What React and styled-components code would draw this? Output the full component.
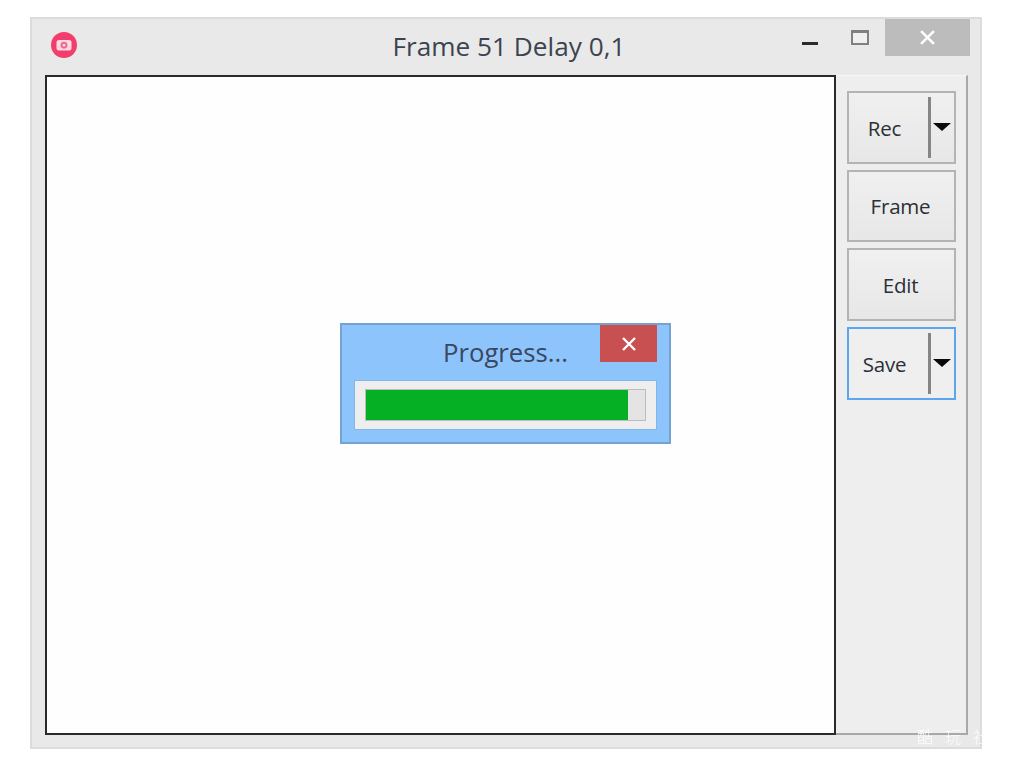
import React from "react";
import styled, { createGlobalStyle } from "styled-components";

const Global = createGlobalStyle`
  html, body { margin: 0; padding: 0; background: #fff; }
  body { font-family: "Open Sans", "Noto Sans", sans-serif; }
`;

const Page = styled.div`
  width: 1020px;
  height: 776px;
  box-sizing: border-box;
  padding: 17px 0 0 30px;
  overflow: hidden;
  filter: blur(0.45px);
`;

const Window = styled.div`
  position: relative;
  width: 952px;
  height: 732px;
  box-sizing: border-box;
  border: 2px solid #dcdcdc;
  background: #e9e9e9;
`;

const TitleBar = styled.header`
  display: grid;
  grid-template-columns: 1fr auto 1fr;
  height: 56px;
`;

const AppIcon = styled.svg`
  width: 28px;
  height: 28px;
  margin: 12px 0 0 18px;
  display: block;
`;

const Title = styled.h1`
  margin: 0;
  padding: 9px 0 0 6px;
  font-size: 26.2px;
  font-weight: 400;
  line-height: 36px;
  color: #3c4350;
  white-space: nowrap;
`;

const Controls = styled.div`
  display: flex;
  justify-content: flex-end;
  align-items: flex-start;
  padding-right: 10px;
`;

const Minimize = styled.span`
  width: 16px;
  height: 3px;
  margin: 23px 33px 0 0;
  background: #2c2c2c;
`;

const Maximize = styled.span`
  width: 18px;
  height: 15px;
  box-sizing: border-box;
  margin: 11px 16px 0 0;
  border: 2px solid #808080;
  border-top-width: 3px;
  background: #efefef;
`;

const CloseButton = styled.button`
  display: flex;
  align-items: center;
  justify-content: center;
  padding: 0;
  border: 0;
  width: ${(p) => p.$w}px;
  height: 37px;
  background: ${(p) => p.$bg};
`;

const Body = styled.div`
  display: flex;
  padding-left: 13px;
`;

const Canvas = styled.main`
  position: relative;
  width: 791px;
  height: 660px;
  box-sizing: border-box;
  border: 2px solid #2a2a2a;
  background: #fefefe;
`;

const Side = styled.aside`
  width: 132px;
  height: 660px;
  box-sizing: border-box;
  display: flex;
  flex-direction: column;
  gap: 6px;
  padding: 15px 0 0 11px;
  background: #eeeeee;
  border-top: 1px solid #f6f6f6;
  border-right: 2px solid #a8a8a8;
  border-bottom: 2px solid #a8a8a8;
`;

const ToolButton = styled.button`
  display: flex;
  align-items: center;
  width: 109px;
  height: 72.67px;
  flex: none;
  box-sizing: border-box;
  padding: 0;
  border: 2px solid ${(p) => (p.$focused ? "#5ba6ee" : "#b4b4b4")};
  background: ${(p) => (p.$focused ? "#efefef" : "linear-gradient(#f0f0f0, #e7e7e7)")};
  font-family: "Open Sans", "Noto Sans", sans-serif;
  font-size: 20.5px;
  letter-spacing: -0.2px;
  color: #2b2f36;
`;

const Label = styled.span`
  display: block;
  box-sizing: border-box;
  width: ${(p) => (p.$split ? "71px" : "100%")};
  padding-right: ${(p) => (p.$split ? "0" : "2px")};
  padding-top: ${(p) => (p.$split ? "1px" : "0")};
  text-align: center;
`;

const Separator = styled.span`
  width: 3px;
  height: 61px;
  margin-left: 8px;
  background: #858585;
`;

const Arrow = styled.span`
  width: 0;
  height: 0;
  margin-left: 2px;
  border-left: 9px solid transparent;
  border-right: 9px solid transparent;
  border-top: 8px solid #0a0a0a;
`;

const Dialog = styled.section`
  position: absolute;
  left: 293px;
  top: 246px;
  width: 331px;
  height: 121px;
  box-sizing: border-box;
  border: 2px solid #74a3d2;
  background: #8cc4fb;
  padding: 0 12px;
`;

const DialogHeader = styled.div`
  position: relative;
  height: 55px;
  text-align: center;
`;

const DialogTitle = styled.h2`
  margin: 0;
  padding-top: 8px;
  font-size: 25.7px;
  font-weight: 400;
  line-height: 40px;
  color: #3b4660;
`;

const DialogClose = styled(CloseButton)`
  position: absolute;
  top: 0;
  right: 0;
`;

const ProgressPanel = styled.div`
  height: 50px;
  box-sizing: border-box;
  padding: 8px 10px;
  background: #eeeeee;
  border: 1px solid #82b6e6;
`;

const Track = styled.div`
  height: 32px;
  box-sizing: border-box;
  border: 1px solid #bcbcbc;
  background: #e4e4e4;
`;

const Fill = styled.div`
  height: 100%;
  background: #06b025;
`;

const Watermark = styled.div`
  position: absolute;
  left: 885px;
  top: 707px;
  font-family: "Noto Sans CJK SC", sans-serif;
  font-size: 16px;
  font-weight: 300;
  letter-spacing: 12px;
  line-height: 20px;
  white-space: nowrap;
  color: #ffffff;
  opacity: 0.9;
`;

const CloseGlyph = ({ size = 14 }) => (
  <svg width={size} height={size} viewBox="0 0 14 14" fill="none">
    <path d="M1 1L13 13M13 1L1 13" stroke="#fff" strokeWidth="2.4" />
  </svg>
);

const Split = () => (
  <>
    <Separator />
    <Arrow />
  </>
);

export default function App() {
  const progress = 94;
  return (
    <>
      <Global />
      <Page>
        <Window>
          <TitleBar>
            <AppIcon viewBox="0 0 28 28">
              <circle cx="14" cy="14" r="13" fill="#f33d6c" />
              <rect x="6.5" y="9" width="15" height="10.5" rx="2.5" fill="#fbdbe3" />
              <circle cx="14" cy="14.2" r="3.4" fill="#f0688c" />
              <circle cx="14" cy="14.2" r="1.4" fill="#fbdbe3" />
            </AppIcon>
            <Title>Frame 51 Delay 0,1</Title>
            <Controls>
              <Minimize />
              <Maximize />
              <CloseButton $w={85} $bg="#bcbcbc">
                <CloseGlyph size={15} />
              </CloseButton>
            </Controls>
          </TitleBar>
          <Body>
            <Canvas>
              <Dialog>
                <DialogHeader>
                  <DialogTitle>Progress...</DialogTitle>
                  <DialogClose $w={57} $bg="#c95050">
                    <CloseGlyph />
                  </DialogClose>
                </DialogHeader>
                <ProgressPanel>
                  <Track>
                    <Fill style={{ width: `${progress}%` }} />
                  </Track>
                </ProgressPanel>
              </Dialog>
            </Canvas>
            <Side>
              <ToolButton>
                <Label $split>Rec</Label>
                <Split />
              </ToolButton>
              <ToolButton>
                <Label>Frame</Label>
              </ToolButton>
              <ToolButton>
                <Label>Edit</Label>
              </ToolButton>
              <ToolButton $focused>
                <Label $split>Save</Label>
                <Split />
              </ToolButton>
            </Side>
          </Body>
          <Watermark>酷玩社</Watermark>
        </Window>
      </Page>
    </>
  );
}
